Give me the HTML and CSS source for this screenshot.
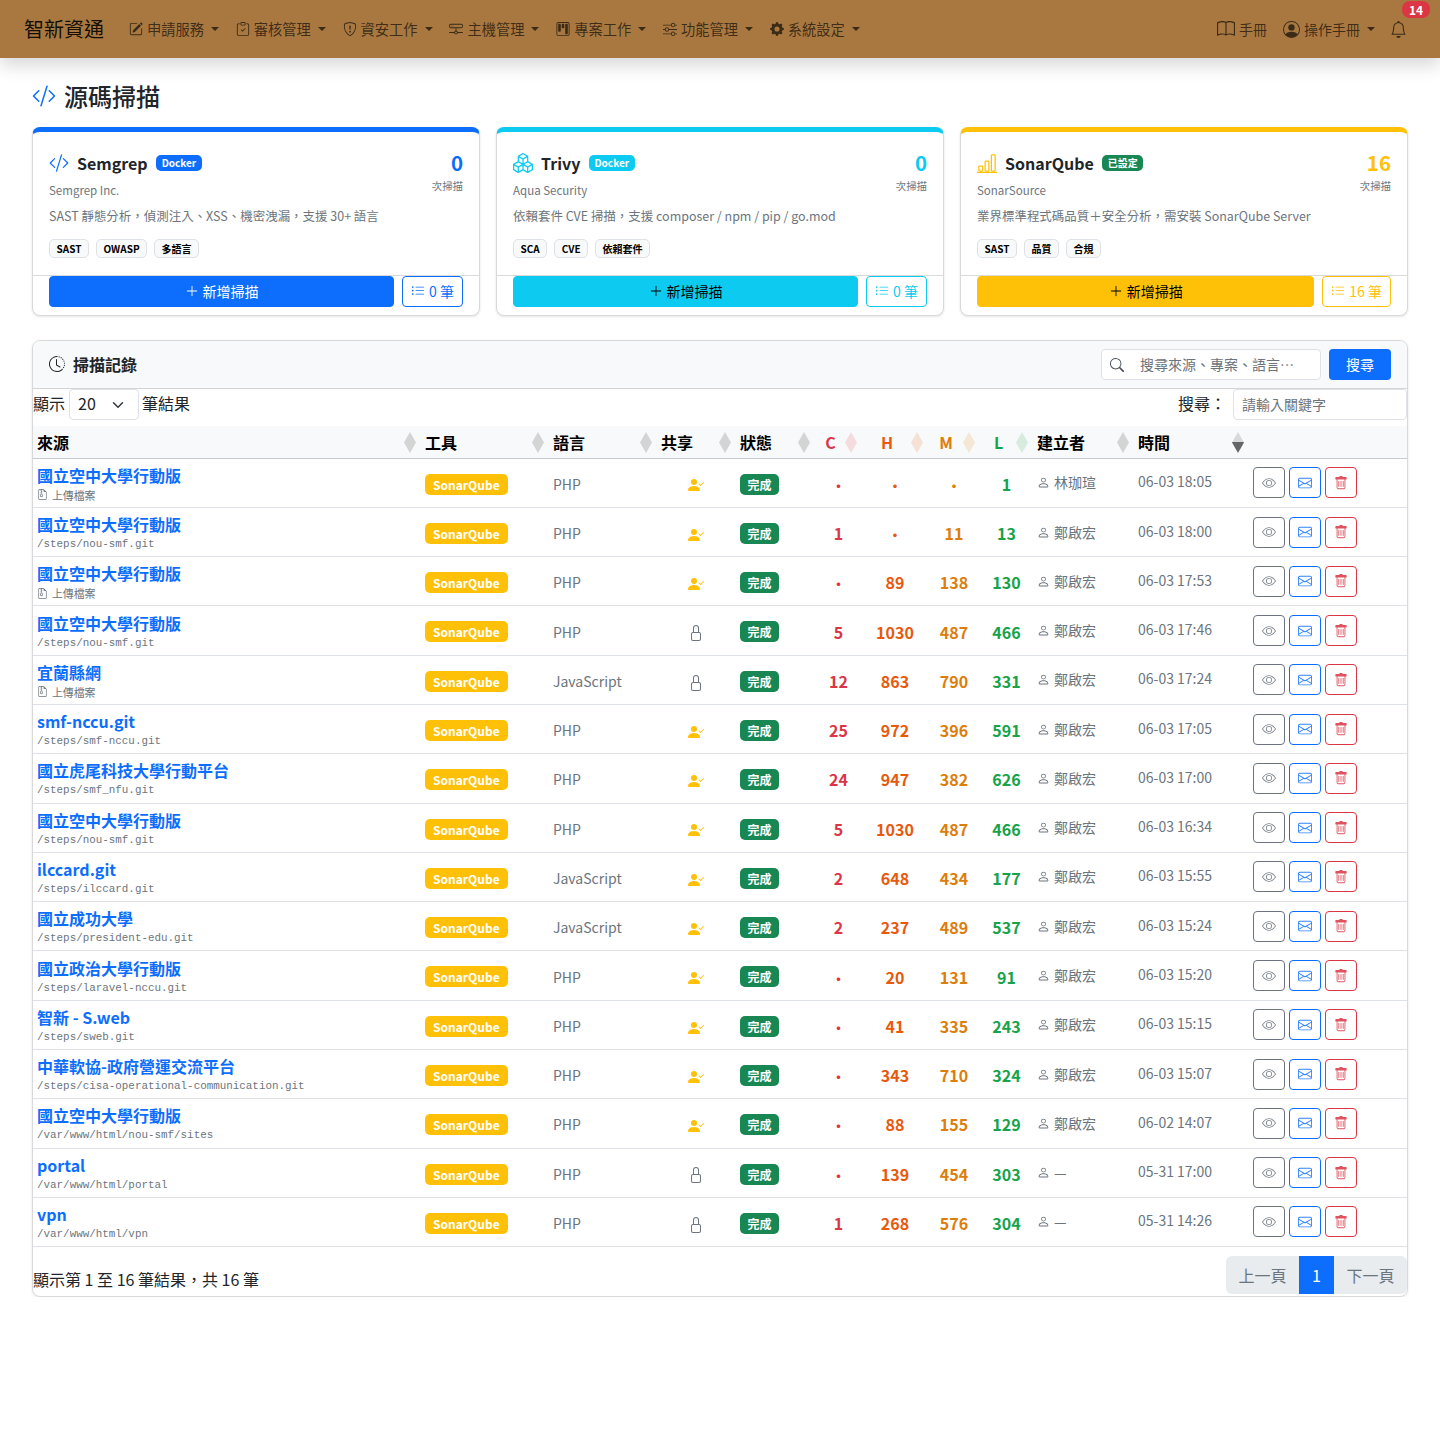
FILE: index.html
```html
<!DOCTYPE html>
<html lang="zh-Hant">
<head>
    <meta charset="utf-8">
    <title>源碼掃描</title>
    <link rel="stylesheet" href="styles.css">
</head>
<body>
    <svg class="icon-defs" xmlns="http://www.w3.org/2000/svg">
        <symbol id="i-code" viewBox="0 0 16 16"><path d="M10.478 1.647a.5.5 0 1 0-.956-.294l-4 13a.5.5 0 0 0 .956.294l4-13zM4.854 4.146a.5.5 0 0 1 0 .708L1.707 8l3.147 3.146a.5.5 0 0 1-.708.708l-3.5-3.5a.5.5 0 0 1 0-.708l3.5-3.5a.5.5 0 0 1 .708 0zm6.292 0a.5.5 0 0 0 0 .708L14.293 8l-3.147 3.146a.5.5 0 0 0 .708.708l3.5-3.5a.5.5 0 0 0 0-.708l-3.5-3.5a.5.5 0 0 0-.708 0z"/></symbol>
        <symbol id="i-pencil" viewBox="0 0 16 16"><path d="M15.502 1.94a.5.5 0 0 1 0 .706L14.459 3.69l-2-2L13.502.646a.5.5 0 0 1 .707 0l1.293 1.293zm-1.75 2.456-2-2L4.939 9.21a.5.5 0 0 0-.121.196l-.805 2.414a.25.25 0 0 0 .316.316l2.414-.805a.5.5 0 0 0 .196-.12l6.813-6.814z"/><path d="M1 13.5A1.5 1.5 0 0 0 2.5 15h11a1.5 1.5 0 0 0 1.5-1.5v-6a.5.5 0 0 0-1 0v6a.5.5 0 0 1-.5.5h-11a.5.5 0 0 1-.5-.5v-11a.5.5 0 0 1 .5-.5H9a.5.5 0 0 0 0-1H2.5A1.5 1.5 0 0 0 1 2.5v11z"/></symbol>
        <symbol id="i-clipboard" viewBox="0 0 16 16"><path d="M10.854 7.146a.5.5 0 0 1 0 .708l-3 3a.5.5 0 0 1-.708 0l-1.5-1.5a.5.5 0 1 1 .708-.708L7.5 9.793l2.646-2.647a.5.5 0 0 1 .708 0z"/><path d="M4 1.5H3a2 2 0 0 0-2 2V14a2 2 0 0 0 2 2h10a2 2 0 0 0 2-2V3.5a2 2 0 0 0-2-2h-1v1h1a1 1 0 0 1 1 1V14a1 1 0 0 1-1 1H3a1 1 0 0 1-1-1V3.5a1 1 0 0 1 1-1h1v-1z"/><path d="M9.5 1a.5.5 0 0 1 .5.5v1a.5.5 0 0 1-.5.5h-3a.5.5 0 0 1-.5-.5v-1a.5.5 0 0 1 .5-.5h3zm-3-1A1.5 1.5 0 0 0 5 1.5v1A1.5 1.5 0 0 0 6.5 4h3A1.5 1.5 0 0 0 11 2.5v-1A1.5 1.5 0 0 0 9.5 0h-3z"/></symbol>
        <symbol id="i-shield" viewBox="0 0 16 16"><path d="M5.338 1.59a61.44 61.44 0 0 0-2.837.856.481.481 0 0 0-.328.39c-.554 4.157.726 7.19 2.253 9.188a10.725 10.725 0 0 0 2.287 2.233c.346.244.652.42.893.533.12.057.218.095.293.118a.55.55 0 0 0 .101.025.615.615 0 0 0 .1-.025c.076-.023.174-.061.294-.118.24-.113.547-.29.893-.533a10.726 10.726 0 0 0 2.287-2.233c1.527-1.997 2.807-5.031 2.253-9.188a.48.48 0 0 0-.328-.39c-.651-.213-1.75-.56-2.837-.855C9.552 1.29 8.531 1.067 8 1.067c-.53 0-1.552.223-2.662.524zM5.072.56C6.157.265 7.31 0 8 0s1.843.265 2.928.56c1.11.3 2.229.655 2.887.87a1.54 1.54 0 0 1 1.044 1.262c.596 4.477-.787 7.795-2.465 9.99a11.775 11.775 0 0 1-2.517 2.453 7.159 7.159 0 0 1-1.048.625c-.28.132-.581.24-.829.24s-.548-.108-.829-.24a7.158 7.158 0 0 1-1.048-.625 11.777 11.777 0 0 1-2.517-2.453C1.928 10.487.545 7.169 1.141 2.692A1.54 1.54 0 0 1 2.185 1.43 62.456 62.456 0 0 1 5.072.56z"/><path d="M7.001 11a1 1 0 1 1 2 0 1 1 0 0 1-2 0zM7.1 4.995a.905.905 0 1 1 1.8 0l-.35 3.507a.553.553 0 0 1-1.1 0L7.1 4.995z"/></symbol>
        <symbol id="i-hdd" viewBox="0 0 16 16"><path d="M4.5 5a.5.5 0 1 0 0-1 .5.5 0 0 0 0 1zM3 4.5a.5.5 0 1 1-1 0 .5.5 0 0 1 1 0z"/><path d="M0 4a2 2 0 0 1 2-2h12a2 2 0 0 1 2 2v1a2 2 0 0 1-2 2H8.5v3a1.5 1.5 0 0 1 1.5 1.5h5.5a.5.5 0 0 1 0 1H10A1.5 1.5 0 0 1 8.5 14h-1A1.5 1.5 0 0 1 6 12.5H.5a.5.5 0 0 1 0-1H6A1.5 1.5 0 0 1 7.5 10V7H2a2 2 0 0 1-2-2V4zm1 0v1a1 1 0 0 0 1 1h12a1 1 0 0 0 1-1V4a1 1 0 0 0-1-1H2a1 1 0 0 0-1 1zm6 7.5v1a.5.5 0 0 0 .5.5h1a.5.5 0 0 0 .5-.5v-1a.5.5 0 0 0-.5-.5h-1a.5.5 0 0 0-.5.5z"/></symbol>
        <symbol id="i-kanban" viewBox="0 0 16 16"><path d="M13.5 1a1 1 0 0 1 1 1v12a1 1 0 0 1-1 1h-11a1 1 0 0 1-1-1V2a1 1 0 0 1 1-1h11zm-11-1a2 2 0 0 0-2 2v12a2 2 0 0 0 2 2h11a2 2 0 0 0 2-2V2a2 2 0 0 0-2-2h-11z"/><path d="M6.5 3a1 1 0 0 1 1-1h1a1 1 0 0 1 1 1v3a1 1 0 0 1-1 1h-1a1 1 0 0 1-1-1V3zm-4 0a1 1 0 0 1 1-1h1a1 1 0 0 1 1 1v7a1 1 0 0 1-1 1h-1a1 1 0 0 1-1-1V3zm8 0a1 1 0 0 1 1-1h1a1 1 0 0 1 1 1v10a1 1 0 0 1-1 1h-1a1 1 0 0 1-1-1V3z"/></symbol>
        <symbol id="i-sliders" viewBox="0 0 16 16"><path d="M11.5 2a1.5 1.5 0 1 0 0 3 1.5 1.5 0 0 0 0-3zM9.05 3a2.5 2.5 0 0 1 4.9 0H16v1h-2.05a2.5 2.5 0 0 1-4.9 0H0V3h9.05zM4.5 7a1.5 1.5 0 1 0 0 3 1.5 1.5 0 0 0 0-3zM2.05 8a2.5 2.5 0 0 1 4.9 0H16v1H6.95a2.5 2.5 0 0 1-4.9 0H0V8h2.05zm9.45 4a1.5 1.5 0 1 0 0 3 1.5 1.5 0 0 0 0-3zm-2.45 1a2.5 2.5 0 0 1 4.9 0H16v1h-2.05a2.5 2.5 0 0 1-4.9 0H0v-1h9.05z"/></symbol>
        <symbol id="i-gear" viewBox="0 0 16 16"><path d="M9.405 1.05c-.413-1.4-2.397-1.4-2.81 0l-.1.34a1.464 1.464 0 0 1-2.105.872l-.31-.17c-1.283-.698-2.686.705-1.987 1.987l.169.311c.446.82.023 1.841-.872 2.105l-.34.1c-1.4.413-1.4 2.397 0 2.81l.34.1a1.464 1.464 0 0 1 .872 2.105l-.17.31c-.698 1.283.705 2.686 1.987 1.987l.311-.169a1.464 1.464 0 0 1 2.105.872l.1.34c.413 1.4 2.397 1.4 2.81 0l.1-.34a1.464 1.464 0 0 1 2.105-.872l.31.17c1.283.698 2.686-.705 1.987-1.987l-.169-.311a1.464 1.464 0 0 1 .872-2.105l.34-.1c1.4-.413 1.4-2.397 0-2.81l-.34-.1a1.464 1.464 0 0 1-.872-2.105l.17-.31c.698-1.283-.705-2.686-1.987-1.987l-.311.169a1.464 1.464 0 0 1-2.105-.872l-.1-.34zM8 10.93a2.929 2.929 0 1 1 0-5.86 2.929 2.929 0 0 1 0 5.858z"/></symbol>
        <symbol id="i-book" viewBox="0 0 16 16"><path d="M1 2.828c.885-.37 2.154-.769 3.388-.893 1.33-.134 2.458.063 3.112.752v9.746c-.935-.53-2.12-.603-3.213-.493-1.18.12-2.37.461-3.287.811V2.828zm7.5-.141c.654-.689 1.782-.886 3.112-.752 1.234.124 2.503.523 3.388.893v9.923c-.918-.35-2.107-.692-3.287-.81-1.094-.111-2.278-.039-3.213.492V2.687zM8 1.783C7.015.936 5.587.81 4.287.94c-1.514.153-3.042.672-3.994 1.105A.5.5 0 0 0 0 2.5v11a.5.5 0 0 0 .707.455c.882-.4 2.303-.881 3.68-1.02 1.409-.142 2.59.087 3.223.877a.5.5 0 0 0 .78 0c.633-.79 1.814-1.019 3.222-.877 1.378.139 2.8.62 3.681 1.02A.5.5 0 0 0 16 13.5v-11a.5.5 0 0 0-.293-.455c-.952-.433-2.48-.952-3.994-1.105C10.413.809 8.985.936 8 1.783z"/></symbol>
        <symbol id="i-person-circle" viewBox="0 0 16 16"><path d="M11 6a3 3 0 1 1-6 0 3 3 0 0 1 6 0z"/><path d="M0 8a8 8 0 1 1 16 0A8 8 0 0 1 0 8zm8-7a7 7 0 0 0-5.468 11.37C3.242 11.226 4.805 10 8 10s4.757 1.225 5.468 2.37A7 7 0 0 0 8 1z"/></symbol>
        <symbol id="i-bell" viewBox="0 0 16 16"><path d="M8 16a2 2 0 0 0 2-2H6a2 2 0 0 0 2 2zM8 1.918l-.797.161A4.002 4.002 0 0 0 4 6c0 .628-.134 2.197-.459 3.742-.16.767-.376 1.566-.663 2.258h10.244c-.287-.692-.502-1.49-.663-2.258C12.134 8.197 12 6.628 12 6a4.002 4.002 0 0 0-3.203-3.92L8 1.917zM14.22 12c.223.447.481.801.78 1H1c.299-.199.557-.553.78-1C2.68 10.2 3 6.88 3 6c0-2.42 1.72-4.44 4.005-4.901a1 1 0 1 1 1.99 0A5.002 5.002 0 0 1 13 6c0 .88.32 4.2 1.22 6z"/></symbol>
        <symbol id="i-boxes" viewBox="0 0 16 16"><path d="M7.752.066a.5.5 0 0 1 .496 0l3.75 2.143a.5.5 0 0 1 .252.434v3.995l3.498 2A.5.5 0 0 1 16 9.07v4.286a.5.5 0 0 1-.252.434l-3.75 2.143a.5.5 0 0 1-.496 0l-3.502-2-3.502 2.001a.5.5 0 0 1-.496 0l-3.75-2.143A.5.5 0 0 1 0 13.357V9.071a.5.5 0 0 1 .252-.434L3.75 6.638V2.643a.5.5 0 0 1 .252-.434L7.752.066ZM4.25 7.504 1.508 9.071l2.742 1.567 2.742-1.567L4.25 7.504ZM7.5 9.933l-2.75 1.571v3.134l2.75-1.571V9.933Zm1 3.134 2.75 1.571v-3.134L8.5 9.933v3.134Zm.508-3.996 2.742 1.567 2.742-1.567-2.742-1.567-2.742 1.567Zm2.242-2.433V3.504L8.5 5.076V8.21l2.75-1.572ZM7.5 8.21V5.076L4.75 3.504v3.134L7.5 8.21ZM5.258 2.643 8 4.21l2.742-1.567L8 1.076 5.258 2.643ZM15 9.933l-2.75 1.571v3.134L15 13.067V9.933ZM3.75 14.638v-3.134L1 9.933v3.134l2.75 1.571Z"/></symbol>
        <symbol id="i-bars" viewBox="0 0 16 16"><path d="M4 11H2v3h2v-3zm5-4H7v7h2V7zm5-5v12h-2V2h2zm-2-1a1 1 0 0 0-1 1v12a1 1 0 0 0 1 1h2a1 1 0 0 0 1-1V2a1 1 0 0 0-1-1h-2zM6 7a1 1 0 0 1 1-1h2a1 1 0 0 1 1 1v7a1 1 0 0 1-1 1H7a1 1 0 0 1-1-1V7zm-5 4a1 1 0 0 1 1-1h2a1 1 0 0 1 1 1v3a1 1 0 0 1-1 1H2a1 1 0 0 1-1-1v-3z"/><path d="M0 15h16v1H0z"/></symbol>
        <symbol id="i-clock" viewBox="0 0 16 16"><path d="M8.515 1.019A7 7 0 0 0 8 1V0a8 8 0 0 1 .589.022l-.074.997zm2.004.45a7.003 7.003 0 0 0-.985-.299l.219-.976c.383.086.76.2 1.126.342l-.36.933zm1.37.71a7.01 7.01 0 0 0-.439-.27l.493-.87a8.025 8.025 0 0 1 .979.654l-.615.789a6.996 6.996 0 0 0-.418-.302zm1.834 1.79a6.99 6.99 0 0 0-.653-.796l.724-.69c.27.285.52.59.747.91l-.818.576zm.744 1.352a7.08 7.08 0 0 0-.214-.468l.893-.45a7.976 7.976 0 0 1 .45 1.088l-.95.313a7.023 7.023 0 0 0-.179-.483zm.53 2.507a6.991 6.991 0 0 0-.1-1.025l.985-.17c.067.386.106.778.116 1.17l-1 .025zm-.131 1.538c.033-.17.06-.339.081-.51l.993.123a7.957 7.957 0 0 1-.23 1.155l-.964-.267c.046-.165.086-.332.12-.501zm-.952 2.379c.184-.29.346-.594.486-.908l.914.405c-.16.36-.345.706-.555 1.038l-.845-.535zm-.964 1.205c.122-.122.239-.248.35-.378l.758.653a8.073 8.073 0 0 1-.401.432l-.707-.707z"/><path d="M8 1a7 7 0 1 0 4.95 11.95l.707.707A8.001 8.001 0 1 1 8 0v1z"/><path d="M7.5 3a.5.5 0 0 1 .5.5v5.21l3.248 1.856a.5.5 0 0 1-.496.868l-3.5-2A.5.5 0 0 1 7 9V3.5a.5.5 0 0 1 .5-.5z"/></symbol>
        <symbol id="i-plus" viewBox="0 0 16 16"><path d="M8 2a.5.5 0 0 1 .5.5v5h5a.5.5 0 0 1 0 1h-5v5a.5.5 0 0 1-1 0v-5h-5a.5.5 0 0 1 0-1h5v-5A.5.5 0 0 1 8 2Z"/></symbol>
        <symbol id="i-list" viewBox="0 0 16 16"><path d="M5 11.5a.5.5 0 0 1 .5-.5h9a.5.5 0 0 1 0 1h-9a.5.5 0 0 1-.5-.5zm0-4a.5.5 0 0 1 .5-.5h9a.5.5 0 0 1 0 1h-9a.5.5 0 0 1-.5-.5zm0-4a.5.5 0 0 1 .5-.5h9a.5.5 0 0 1 0 1h-9a.5.5 0 0 1-.5-.5zm-3 1a1 1 0 1 0 0-2 1 1 0 0 0 0 2zm0 4a1 1 0 1 0 0-2 1 1 0 0 0 0 2zm0 4a1 1 0 1 0 0-2 1 1 0 0 0 0 2z"/></symbol>
        <symbol id="i-search" viewBox="0 0 16 16"><path d="M11.742 10.344a6.5 6.5 0 1 0-1.397 1.398h-.001c.03.04.062.078.098.115l3.85 3.85a1 1 0 0 0 1.415-1.414l-3.85-3.85a1.007 1.007 0 0 0-.115-.1zM12 6.5a5.5 5.5 0 1 1-11 0 5.5 5.5 0 0 1 11 0z"/></symbol>
        <symbol id="i-eye" viewBox="0 0 16 16"><path d="M16 8s-3-5.5-8-5.5S0 8 0 8s3 5.5 8 5.5S16 8 16 8zM1.173 8a13.133 13.133 0 0 1 1.66-2.043C4.12 4.668 5.88 3.5 8 3.5c2.12 0 3.879 1.168 5.168 2.457A13.133 13.133 0 0 1 14.828 8c-.058.087-.122.183-.195.288-.335.48-.83 1.12-1.465 1.755C11.879 11.332 10.119 12.5 8 12.5c-2.12 0-3.879-1.168-5.168-2.457A13.134 13.134 0 0 1 1.172 8z"/><path d="M8 5.5a2.5 2.5 0 1 0 0 5 2.5 2.5 0 0 0 0-5zM4.5 8a3.5 3.5 0 1 1 7 0 3.5 3.5 0 0 1-7 0z"/></symbol>
        <symbol id="i-mail" viewBox="0 0 16 16"><path d="M0 4a2 2 0 0 1 2-2h12a2 2 0 0 1 2 2v8a2 2 0 0 1-2 2H2a2 2 0 0 1-2-2V4Zm2-1a1 1 0 0 0-1 1v.217l7 4.2 7-4.2V4a1 1 0 0 0-1-1H2Zm13 2.383-4.708 2.825L15 11.105V5.383Zm-.034 6.876-5.64-3.471L8 9.583l-1.326-.795-5.64 3.47A1 1 0 0 0 2 13h12a1 1 0 0 0 .966-.741ZM1 11.105l4.708-2.897L1 5.383v5.722Z"/></symbol>
        <symbol id="i-trash" viewBox="0 0 16 16"><path d="M5.5 5.5A.5.5 0 0 1 6 6v6a.5.5 0 0 1-1 0V6a.5.5 0 0 1 .5-.5zm2.5 0a.5.5 0 0 1 .5.5v6a.5.5 0 0 1-1 0V6a.5.5 0 0 1 .5-.5zm3 .5a.5.5 0 0 0-1 0v6a.5.5 0 0 0 1 0V6z"/><path d="M14.5 3a1 1 0 0 1-1 1H13v9a2 2 0 0 1-2 2H5a2 2 0 0 1-2-2V4h-.5a1 1 0 0 1-1-1V2a1 1 0 0 1 1-1H6a1 1 0 0 1 1-1h2a1 1 0 0 1 1 1h3.5a1 1 0 0 1 1 1v1zM4.118 4 4 4.059V13a1 1 0 0 0 1 1h6a1 1 0 0 0 1-1V4.059L11.882 4H4.118zM2.5 3V2h11v1h-11z"/></symbol>
        <symbol id="i-person" viewBox="0 0 16 16"><path d="M8 8a3 3 0 1 0 0-6 3 3 0 0 0 0 6Zm2-3a2 2 0 1 1-4 0 2 2 0 0 1 4 0Zm4 8c0 1-1 1-1 1H3s-1 0-1-1 1-4 6-4 6 3 6 4Zm-1-.004c-.001-.246-.154-.986-.832-1.664C11.516 10.68 10.289 10 8 10c-2.29 0-3.516.68-4.168 1.332-.678.678-.83 1.418-.832 1.664h10Z"/></symbol>
        <symbol id="i-shared" viewBox="0 0 16 16"><path d="M15.854 5.146a.5.5 0 0 1 0 .708l-3 3a.5.5 0 0 1-.708 0l-1.5-1.5a.5.5 0 0 1 .708-.708L12.5 7.793l2.646-2.647a.5.5 0 0 1 .708 0z"/><path d="M1 14s-1 0-1-1 1-4 6-4 6 3 6 4-1 1-1 1H1zm5-6a3 3 0 1 0 0-6 3 3 0 0 0 0 6z"/></symbol>
        <symbol id="i-lock" viewBox="0 0 16 16"><path d="M8 1a2 2 0 0 1 2 2v4H6V3a2 2 0 0 1 2-2zm3 6V3a3 3 0 0 0-6 0v4a2 2 0 0 0-2 2v5a2 2 0 0 0 2 2h6a2 2 0 0 0 2-2V9a2 2 0 0 0-2-2zM5 8h6a1 1 0 0 1 1 1v5a1 1 0 0 1-1 1H5a1 1 0 0 1-1-1V9a1 1 0 0 1 1-1z"/></symbol>
        <symbol id="i-zip" viewBox="0 0 16 16"><path d="M5 7.5a1 1 0 0 1 1-1h1a1 1 0 0 1 1 1v.938l.4 1.599a1 1 0 0 1-.416 1.074l-.93.62a1 1 0 0 1-1.11 0l-.929-.62a1 1 0 0 1-.415-1.074L5 8.438V7.5zm2 0H6v.938a1 1 0 0 1-.03.243l-.4 1.598.93.62.929-.62-.4-1.598A1 1 0 0 1 7 8.438V7.5z"/><path d="M14 4.5V14a2 2 0 0 1-2 2H4a2 2 0 0 1-2-2V2a2 2 0 0 1 2-2h5.5L14 4.5zm-3 0A1.5 1.5 0 0 1 9.5 3V1h-2v1h-1v1h1v1h-1v1h1v1H6V5H5V4h1V3H5V2h1V1H4a1 1 0 0 0-1 1v12a1 1 0 0 0 1 1h8a1 1 0 0 0 1-1V4.5h-2z"/></symbol>
    </svg>

    <nav class="navbar">
        <a class="brand">智新資通</a>
        <ul class="nav-menu">
            <li class="nav-link"><svg class="ic"><use href="#i-pencil"/></svg>申請服務<span class="caret"></span></li>
            <li class="nav-link"><svg class="ic"><use href="#i-clipboard"/></svg>審核管理<span class="caret"></span></li>
            <li class="nav-link"><svg class="ic"><use href="#i-shield"/></svg>資安工作<span class="caret"></span></li>
            <li class="nav-link"><svg class="ic"><use href="#i-hdd"/></svg>主機管理<span class="caret"></span></li>
            <li class="nav-link"><svg class="ic"><use href="#i-kanban"/></svg>專案工作<span class="caret"></span></li>
            <li class="nav-link"><svg class="ic"><use href="#i-sliders"/></svg>功能管理<span class="caret"></span></li>
            <li class="nav-link"><svg class="ic"><use href="#i-gear"/></svg>系統設定<span class="caret"></span></li>
        </ul>
        <div class="nav-right">
            <a class="nav-plain"><svg class="ic ic-lg"><use href="#i-book"/></svg>手冊</a>
            <a class="nav-plain"><svg class="ic ic-user"><use href="#i-person-circle"/></svg>操作手冊<span class="caret"></span></a>
            <a class="nav-bell">
                <svg class="ic ic-bell"><use href="#i-bell"/></svg>
                <span class="bell-count">14</span>
            </a>
        </div>
    </nav>

    <main class="page">
        <h1 class="page-title"><svg class="ic title-icon"><use href="#i-code"/></svg>源碼掃描</h1>

        <section class="tool-grid">
            <div class="tool-card card-blue">
                <div class="tool-body">
                    <div class="tool-head">
                        <div>
                            <div class="tool-name"><svg class="ic tool-icon"><use href="#i-code"/></svg>Semgrep<span class="pill pill-blue">Docker</span></div>
                            <div class="tool-vendor">Semgrep Inc.</div>
                        </div>
                        <div class="tool-count"><strong>0</strong><span>次掃描</span></div>
                    </div>
                    <p class="tool-desc">SAST 靜態分析&#xFF0C;偵測注入、XSS、機密洩漏&#xFF0C;支援 30+ 語言</p>
                    <div class="tags"><span class="tag">SAST</span><span class="tag">OWASP</span><span class="tag">多語言</span></div>
                </div>
                <div class="tool-foot">
                    <button class="btn-add"><svg class="ic"><use href="#i-plus"/></svg>新增掃描</button>
                    <button class="btn-list"><svg class="ic"><use href="#i-list"/></svg>0 筆</button>
                </div>
            </div>

            <div class="tool-card card-cyan">
                <div class="tool-body">
                    <div class="tool-head">
                        <div>
                            <div class="tool-name"><svg class="ic tool-icon"><use href="#i-boxes"/></svg>Trivy<span class="pill pill-cyan">Docker</span></div>
                            <div class="tool-vendor">Aqua Security</div>
                        </div>
                        <div class="tool-count"><strong>0</strong><span>次掃描</span></div>
                    </div>
                    <p class="tool-desc">依賴套件 CVE 掃描&#xFF0C;支援 composer / npm / pip / go.mod</p>
                    <div class="tags"><span class="tag">SCA</span><span class="tag">CVE</span><span class="tag">依賴套件</span></div>
                </div>
                <div class="tool-foot">
                    <button class="btn-add"><svg class="ic"><use href="#i-plus"/></svg>新增掃描</button>
                    <button class="btn-list"><svg class="ic"><use href="#i-list"/></svg>0 筆</button>
                </div>
            </div>

            <div class="tool-card card-yellow">
                <div class="tool-body">
                    <div class="tool-head">
                        <div>
                            <div class="tool-name"><svg class="ic tool-icon"><use href="#i-bars"/></svg>SonarQube<span class="pill pill-green">已設定</span></div>
                            <div class="tool-vendor">SonarSource</div>
                        </div>
                        <div class="tool-count"><strong>16</strong><span>次掃描</span></div>
                    </div>
                    <p class="tool-desc">業界標準程式碼品質&#xFF0B;安全分析&#xFF0C;需安裝 SonarQube Server</p>
                    <div class="tags"><span class="tag">SAST</span><span class="tag">品質</span><span class="tag">合規</span></div>
                </div>
                <div class="tool-foot">
                    <button class="btn-add"><svg class="ic"><use href="#i-plus"/></svg>新增掃描</button>
                    <button class="btn-list"><svg class="ic"><use href="#i-list"/></svg>16 筆</button>
                </div>
            </div>
        </section>

        <section class="panel">
            <div class="panel-head">
                <div class="panel-title"><svg class="ic"><use href="#i-clock"/></svg>掃描記錄</div>
                <form class="panel-search">
                    <label class="search-box"><svg class="ic"><use href="#i-search"/></svg><input type="text" placeholder="搜尋來源、專案、語言…"></label>
                    <button type="button" class="btn-search">搜尋</button>
                </form>
            </div>

            <div class="table-tools">
                <div class="length">顯示<select class="length-select"><option>20</option></select>筆結果</div>
                <label class="filter">搜尋&#xFF1A;<input type="text" placeholder="請輸入關鍵字"></label>
            </div>

            <table class="scans">
                <colgroup>
                    <col class="w-src"><col class="w-tool"><col class="w-lang"><col class="w-share"><col class="w-state">
                    <col class="w-c"><col class="w-h"><col class="w-m"><col class="w-l">
                    <col class="w-user"><col class="w-time"><col class="w-act">
                </colgroup>
                <thead>
                    <tr>
                        <th>來源<i class="sort"></i></th>
                        <th>工具<i class="sort"></i></th>
                        <th>語言<i class="sort"></i></th>
                        <th>共享<i class="sort"></i></th>
                        <th>狀態<i class="sort"></i></th>
                        <th class="sev sev-c">C<i class="sort"></i></th>
                        <th class="sev sev-h">H<i class="sort"></i></th>
                        <th class="sev sev-m">M<i class="sort"></i></th>
                        <th class="sev sev-l">L<i class="sort"></i></th>
                        <th>建立者<i class="sort"></i></th>
                        <th>時間<i class="sort sort-desc"></i></th>
                        <th></th>
                    </tr>
                </thead>
                <tbody>
                    <tr>
                        <td><a class="src-name">國立空中大學行動版</a><div class="src-file"><svg class="ic"><use href="#i-zip"/></svg>上傳檔案</div></td>
                        <td><span class="badge badge-tool">SonarQube</span></td><td class="lang">PHP</td>
                        <td class="share"><svg class="ic is-shared"><use href="#i-shared"/></svg></td>
                        <td><span class="badge badge-done">完成</span></td>
                        <td class="num num-c"><span class="nil">•</span></td><td class="num num-h"><span class="nil">•</span></td><td class="num num-m"><span class="nil">•</span></td><td class="num num-l">1</td>
                        <td class="muted"><svg class="ic user-ic"><use href="#i-person"/></svg>林珈瑄</td><td class="muted when">06-03 18:05</td>
                        <td><div class="actions"><button class="act act-view"><svg class="ic"><use href="#i-eye"/></svg></button><button class="act act-mail"><svg class="ic"><use href="#i-mail"/></svg></button><button class="act act-del"><svg class="ic"><use href="#i-trash"/></svg></button></div></td>
                    </tr>
                    <tr>
                        <td><a class="src-name">國立空中大學行動版</a><div class="src-path">/steps/nou-smf.git</div></td>
                        <td><span class="badge badge-tool">SonarQube</span></td><td class="lang">PHP</td>
                        <td class="share"><svg class="ic is-shared"><use href="#i-shared"/></svg></td>
                        <td><span class="badge badge-done">完成</span></td>
                        <td class="num num-c">1</td><td class="num num-h"><span class="nil">•</span></td><td class="num num-m">11</td><td class="num num-l">13</td>
                        <td class="muted"><svg class="ic user-ic"><use href="#i-person"/></svg>鄭啟宏</td><td class="muted when">06-03 18:00</td>
                        <td><div class="actions"><button class="act act-view"><svg class="ic"><use href="#i-eye"/></svg></button><button class="act act-mail"><svg class="ic"><use href="#i-mail"/></svg></button><button class="act act-del"><svg class="ic"><use href="#i-trash"/></svg></button></div></td>
                    </tr>
                    <tr>
                        <td><a class="src-name">國立空中大學行動版</a><div class="src-file"><svg class="ic"><use href="#i-zip"/></svg>上傳檔案</div></td>
                        <td><span class="badge badge-tool">SonarQube</span></td><td class="lang">PHP</td>
                        <td class="share"><svg class="ic is-shared"><use href="#i-shared"/></svg></td>
                        <td><span class="badge badge-done">完成</span></td>
                        <td class="num num-c"><span class="nil">•</span></td><td class="num num-h">89</td><td class="num num-m">138</td><td class="num num-l">130</td>
                        <td class="muted"><svg class="ic user-ic"><use href="#i-person"/></svg>鄭啟宏</td><td class="muted when">06-03 17:53</td>
                        <td><div class="actions"><button class="act act-view"><svg class="ic"><use href="#i-eye"/></svg></button><button class="act act-mail"><svg class="ic"><use href="#i-mail"/></svg></button><button class="act act-del"><svg class="ic"><use href="#i-trash"/></svg></button></div></td>
                    </tr>
                    <tr>
                        <td><a class="src-name">國立空中大學行動版</a><div class="src-path">/steps/nou-smf.git</div></td>
                        <td><span class="badge badge-tool">SonarQube</span></td><td class="lang">PHP</td>
                        <td class="share"><svg class="ic is-private"><use href="#i-lock"/></svg></td>
                        <td><span class="badge badge-done">完成</span></td>
                        <td class="num num-c">5</td><td class="num num-h">1030</td><td class="num num-m">487</td><td class="num num-l">466</td>
                        <td class="muted"><svg class="ic user-ic"><use href="#i-person"/></svg>鄭啟宏</td><td class="muted when">06-03 17:46</td>
                        <td><div class="actions"><button class="act act-view"><svg class="ic"><use href="#i-eye"/></svg></button><button class="act act-mail"><svg class="ic"><use href="#i-mail"/></svg></button><button class="act act-del"><svg class="ic"><use href="#i-trash"/></svg></button></div></td>
                    </tr>
                    <tr>
                        <td><a class="src-name">宜蘭縣網</a><div class="src-file"><svg class="ic"><use href="#i-zip"/></svg>上傳檔案</div></td>
                        <td><span class="badge badge-tool">SonarQube</span></td><td class="lang">JavaScript</td>
                        <td class="share"><svg class="ic is-private"><use href="#i-lock"/></svg></td>
                        <td><span class="badge badge-done">完成</span></td>
                        <td class="num num-c">12</td><td class="num num-h">863</td><td class="num num-m">790</td><td class="num num-l">331</td>
                        <td class="muted"><svg class="ic user-ic"><use href="#i-person"/></svg>鄭啟宏</td><td class="muted when">06-03 17:24</td>
                        <td><div class="actions"><button class="act act-view"><svg class="ic"><use href="#i-eye"/></svg></button><button class="act act-mail"><svg class="ic"><use href="#i-mail"/></svg></button><button class="act act-del"><svg class="ic"><use href="#i-trash"/></svg></button></div></td>
                    </tr>
                    <tr>
                        <td><a class="src-name">smf-nccu.git</a><div class="src-path">/steps/smf-nccu.git</div></td>
                        <td><span class="badge badge-tool">SonarQube</span></td><td class="lang">PHP</td>
                        <td class="share"><svg class="ic is-shared"><use href="#i-shared"/></svg></td>
                        <td><span class="badge badge-done">完成</span></td>
                        <td class="num num-c">25</td><td class="num num-h">972</td><td class="num num-m">396</td><td class="num num-l">591</td>
                        <td class="muted"><svg class="ic user-ic"><use href="#i-person"/></svg>鄭啟宏</td><td class="muted when">06-03 17:05</td>
                        <td><div class="actions"><button class="act act-view"><svg class="ic"><use href="#i-eye"/></svg></button><button class="act act-mail"><svg class="ic"><use href="#i-mail"/></svg></button><button class="act act-del"><svg class="ic"><use href="#i-trash"/></svg></button></div></td>
                    </tr>
                    <tr>
                        <td><a class="src-name">國立虎尾科技大學行動平台</a><div class="src-path">/steps/smf_nfu.git</div></td>
                        <td><span class="badge badge-tool">SonarQube</span></td><td class="lang">PHP</td>
                        <td class="share"><svg class="ic is-shared"><use href="#i-shared"/></svg></td>
                        <td><span class="badge badge-done">完成</span></td>
                        <td class="num num-c">24</td><td class="num num-h">947</td><td class="num num-m">382</td><td class="num num-l">626</td>
                        <td class="muted"><svg class="ic user-ic"><use href="#i-person"/></svg>鄭啟宏</td><td class="muted when">06-03 17:00</td>
                        <td><div class="actions"><button class="act act-view"><svg class="ic"><use href="#i-eye"/></svg></button><button class="act act-mail"><svg class="ic"><use href="#i-mail"/></svg></button><button class="act act-del"><svg class="ic"><use href="#i-trash"/></svg></button></div></td>
                    </tr>
                    <tr>
                        <td><a class="src-name">國立空中大學行動版</a><div class="src-path">/steps/nou-smf.git</div></td>
                        <td><span class="badge badge-tool">SonarQube</span></td><td class="lang">PHP</td>
                        <td class="share"><svg class="ic is-shared"><use href="#i-shared"/></svg></td>
                        <td><span class="badge badge-done">完成</span></td>
                        <td class="num num-c">5</td><td class="num num-h">1030</td><td class="num num-m">487</td><td class="num num-l">466</td>
                        <td class="muted"><svg class="ic user-ic"><use href="#i-person"/></svg>鄭啟宏</td><td class="muted when">06-03 16:34</td>
                        <td><div class="actions"><button class="act act-view"><svg class="ic"><use href="#i-eye"/></svg></button><button class="act act-mail"><svg class="ic"><use href="#i-mail"/></svg></button><button class="act act-del"><svg class="ic"><use href="#i-trash"/></svg></button></div></td>
                    </tr>
                    <tr>
                        <td><a class="src-name">ilccard.git</a><div class="src-path">/steps/ilccard.git</div></td>
                        <td><span class="badge badge-tool">SonarQube</span></td><td class="lang">JavaScript</td>
                        <td class="share"><svg class="ic is-shared"><use href="#i-shared"/></svg></td>
                        <td><span class="badge badge-done">完成</span></td>
                        <td class="num num-c">2</td><td class="num num-h">648</td><td class="num num-m">434</td><td class="num num-l">177</td>
                        <td class="muted"><svg class="ic user-ic"><use href="#i-person"/></svg>鄭啟宏</td><td class="muted when">06-03 15:55</td>
                        <td><div class="actions"><button class="act act-view"><svg class="ic"><use href="#i-eye"/></svg></button><button class="act act-mail"><svg class="ic"><use href="#i-mail"/></svg></button><button class="act act-del"><svg class="ic"><use href="#i-trash"/></svg></button></div></td>
                    </tr>
                    <tr>
                        <td><a class="src-name">國立成功大學</a><div class="src-path">/steps/president-edu.git</div></td>
                        <td><span class="badge badge-tool">SonarQube</span></td><td class="lang">JavaScript</td>
                        <td class="share"><svg class="ic is-shared"><use href="#i-shared"/></svg></td>
                        <td><span class="badge badge-done">完成</span></td>
                        <td class="num num-c">2</td><td class="num num-h">237</td><td class="num num-m">489</td><td class="num num-l">537</td>
                        <td class="muted"><svg class="ic user-ic"><use href="#i-person"/></svg>鄭啟宏</td><td class="muted when">06-03 15:24</td>
                        <td><div class="actions"><button class="act act-view"><svg class="ic"><use href="#i-eye"/></svg></button><button class="act act-mail"><svg class="ic"><use href="#i-mail"/></svg></button><button class="act act-del"><svg class="ic"><use href="#i-trash"/></svg></button></div></td>
                    </tr>
                    <tr>
                        <td><a class="src-name">國立政治大學行動版</a><div class="src-path">/steps/laravel-nccu.git</div></td>
                        <td><span class="badge badge-tool">SonarQube</span></td><td class="lang">PHP</td>
                        <td class="share"><svg class="ic is-shared"><use href="#i-shared"/></svg></td>
                        <td><span class="badge badge-done">完成</span></td>
                        <td class="num num-c"><span class="nil">•</span></td><td class="num num-h">20</td><td class="num num-m">131</td><td class="num num-l">91</td>
                        <td class="muted"><svg class="ic user-ic"><use href="#i-person"/></svg>鄭啟宏</td><td class="muted when">06-03 15:20</td>
                        <td><div class="actions"><button class="act act-view"><svg class="ic"><use href="#i-eye"/></svg></button><button class="act act-mail"><svg class="ic"><use href="#i-mail"/></svg></button><button class="act act-del"><svg class="ic"><use href="#i-trash"/></svg></button></div></td>
                    </tr>
                    <tr>
                        <td><a class="src-name">智新 - S.web</a><div class="src-path">/steps/sweb.git</div></td>
                        <td><span class="badge badge-tool">SonarQube</span></td><td class="lang">PHP</td>
                        <td class="share"><svg class="ic is-shared"><use href="#i-shared"/></svg></td>
                        <td><span class="badge badge-done">完成</span></td>
                        <td class="num num-c"><span class="nil">•</span></td><td class="num num-h">41</td><td class="num num-m">335</td><td class="num num-l">243</td>
                        <td class="muted"><svg class="ic user-ic"><use href="#i-person"/></svg>鄭啟宏</td><td class="muted when">06-03 15:15</td>
                        <td><div class="actions"><button class="act act-view"><svg class="ic"><use href="#i-eye"/></svg></button><button class="act act-mail"><svg class="ic"><use href="#i-mail"/></svg></button><button class="act act-del"><svg class="ic"><use href="#i-trash"/></svg></button></div></td>
                    </tr>
                    <tr>
                        <td><a class="src-name">中華軟協-政府營運交流平台</a><div class="src-path">/steps/cisa-operational-communication.git</div></td>
                        <td><span class="badge badge-tool">SonarQube</span></td><td class="lang">PHP</td>
                        <td class="share"><svg class="ic is-shared"><use href="#i-shared"/></svg></td>
                        <td><span class="badge badge-done">完成</span></td>
                        <td class="num num-c"><span class="nil">•</span></td><td class="num num-h">343</td><td class="num num-m">710</td><td class="num num-l">324</td>
                        <td class="muted"><svg class="ic user-ic"><use href="#i-person"/></svg>鄭啟宏</td><td class="muted when">06-03 15:07</td>
                        <td><div class="actions"><button class="act act-view"><svg class="ic"><use href="#i-eye"/></svg></button><button class="act act-mail"><svg class="ic"><use href="#i-mail"/></svg></button><button class="act act-del"><svg class="ic"><use href="#i-trash"/></svg></button></div></td>
                    </tr>
                    <tr>
                        <td><a class="src-name">國立空中大學行動版</a><div class="src-path">/var/www/html/nou-smf/sites</div></td>
                        <td><span class="badge badge-tool">SonarQube</span></td><td class="lang">PHP</td>
                        <td class="share"><svg class="ic is-shared"><use href="#i-shared"/></svg></td>
                        <td><span class="badge badge-done">完成</span></td>
                        <td class="num num-c"><span class="nil">•</span></td><td class="num num-h">88</td><td class="num num-m">155</td><td class="num num-l">129</td>
                        <td class="muted"><svg class="ic user-ic"><use href="#i-person"/></svg>鄭啟宏</td><td class="muted when">06-02 14:07</td>
                        <td><div class="actions"><button class="act act-view"><svg class="ic"><use href="#i-eye"/></svg></button><button class="act act-mail"><svg class="ic"><use href="#i-mail"/></svg></button><button class="act act-del"><svg class="ic"><use href="#i-trash"/></svg></button></div></td>
                    </tr>
                    <tr>
                        <td><a class="src-name">portal</a><div class="src-path">/var/www/html/portal</div></td>
                        <td><span class="badge badge-tool">SonarQube</span></td><td class="lang">PHP</td>
                        <td class="share"><svg class="ic is-private"><use href="#i-lock"/></svg></td>
                        <td><span class="badge badge-done">完成</span></td>
                        <td class="num num-c"><span class="nil">•</span></td><td class="num num-h">139</td><td class="num num-m">454</td><td class="num num-l">303</td>
                        <td class="muted"><svg class="ic user-ic"><use href="#i-person"/></svg>—</td><td class="muted when">05-31 17:00</td>
                        <td><div class="actions"><button class="act act-view"><svg class="ic"><use href="#i-eye"/></svg></button><button class="act act-mail"><svg class="ic"><use href="#i-mail"/></svg></button><button class="act act-del"><svg class="ic"><use href="#i-trash"/></svg></button></div></td>
                    </tr>
                    <tr>
                        <td><a class="src-name">vpn</a><div class="src-path">/var/www/html/vpn</div></td>
                        <td><span class="badge badge-tool">SonarQube</span></td><td class="lang">PHP</td>
                        <td class="share"><svg class="ic is-private"><use href="#i-lock"/></svg></td>
                        <td><span class="badge badge-done">完成</span></td>
                        <td class="num num-c">1</td><td class="num num-h">268</td><td class="num num-m">576</td><td class="num num-l">304</td>
                        <td class="muted"><svg class="ic user-ic"><use href="#i-person"/></svg>—</td><td class="muted when">05-31 14:26</td>
                        <td><div class="actions"><button class="act act-view"><svg class="ic"><use href="#i-eye"/></svg></button><button class="act act-mail"><svg class="ic"><use href="#i-mail"/></svg></button><button class="act act-del"><svg class="ic"><use href="#i-trash"/></svg></button></div></td>
                    </tr>
                </tbody>
            </table>

            <div class="table-foot">
                <div class="table-info">顯示第 1 至 16 筆結果&#xFF0C;共 16 筆</div>
                <ul class="pager">
                    <li class="pager-item">上一頁</li>
                    <li class="pager-item is-current">1</li>
                    <li class="pager-item">下一頁</li>
                </ul>
            </div>
        </section>
    </main>
</body>
</html>
```

FILE: styles.css
```css
* {
    box-sizing: border-box;
}
body {
    margin: 0;
    font-family: "Noto Sans CJK TC", "Noto Sans", sans-serif;
    font-size: 16px;
    line-height: 1.5;
    color: #212529;
    background-color: #fff;
}
.icon-defs {
    display: none;
}
.ic {
    width: 14px;
    height: 14px;
    fill: currentColor;
    flex: none;
}

/* navbar */
.navbar {
    height: 58px;
    display: flex;
    align-items: center;
    padding: 0 10px 0 24px;
    background-color: #a87840;
    box-shadow: 0 8px 16px rgba(0,0,0,0.15);
    color: rgba(0,0,0,0.65);
}
.brand {
    font-size: 20px;
    color: rgba(0,0,0,0.9);
    margin-right: 17px;
}
.nav-menu {
    display: flex;
    list-style: none;
    margin: 0;
    padding: 0;
}
.nav-link {
    display: flex;
    align-items: center;
    width: 106.8px;
    padding: 0 8px;
    font-size: 14.25px;
}
.nav-link .ic {
    margin-right: 4px;
}
.nav-plain {
    display: flex;
    align-items: center;
    padding: 0 8px;
    font-size: 14px;
}
.caret {
    display: inline-block;
    margin-left: 7px;
    border-top: 4.3px solid;
    border-left: 4.3px solid transparent;
    border-right: 4.3px solid transparent;
}
.nav-right {
    margin-left: auto;
    display: flex;
    align-items: center;
}
.ic-lg {
    width: 18px;
    height: 18px;
    margin-right: 4px;
}
.ic-user {
    width: 17px;
    height: 17px;
    margin-right: 4px;
}
.nav-bell {
    position: relative;
    display: flex;
    padding: 0 23px 0 7px;
}
.ic-bell {
    width: 17px;
    height: 17px;
}
.bell-count {
    position: absolute;
    top: -20px;
    left: 19px;
    width: 28px;
    height: 17px;
    border-radius: 8px;
    background-color: #dc3545;
    color: #fff;
    font-size: 12px;
    font-weight: 700;
    line-height: 17px;
    text-align: center;
}

/* page */
.page {
    padding: 0 32px;
}
.page-title {
    display: flex;
    align-items: center;
    margin: 0;
    padding-top: 7px;
    height: 69px;
    font-size: 24px;
    font-weight: 500;
    line-height: 36px;
}
.title-icon {
    width: 24px;
    height: 24px;
    color: #0d6efd;
    margin-right: 8px;
}

/* tool cards */
.tool-grid {
    display: grid;
    grid-template-columns: repeat(3, 1fr);
    gap: 16px;
}
.tool-card {
    border: 1px solid rgba(0,0,0,0.15);
    border-top: 5px solid;
    border-radius: 8px;
    background-color: #fff;
    box-shadow: 0 1px 3px rgba(0,0,0,0.1);
    height: 189px;
}
.card-blue { border-top-color: #0d6efd; --tone: #0d6efd; --on-tone: #fff; }
.card-cyan { border-top-color: #0dcaf0; --tone: #0dcaf0; --on-tone: #000; }
.card-yellow { border-top-color: #ffc107; --tone: #ffc107; --on-tone: #000; }
.tool-body {
    padding: 16px;
    height: 144px;
    border-bottom: 1px solid rgba(0,0,0,0.15);
}
.tool-head {
    display: flex;
    justify-content: space-between;
}
.tool-name {
    display: flex;
    align-items: center;
    height: 30px;
    font-size: 16px;
    font-weight: 700;
}
.tool-icon {
    width: 20px;
    height: 20px;
    margin-right: 8px;
    color: var(--tone);
}
.pill {
    margin-left: 8.5px;
    padding: 0 5.5px;
    height: 16px;
    border-radius: 5px;
    color: #fff;
    font-size: 10px;
    font-weight: 700;
    line-height: 15px;
}
.pill-blue { background-color: #0d6efd; }
.pill-cyan { background-color: #0dcaf0; }
.pill-green { background-color: #198754; }
.tool-vendor {
    margin-top: 3px;
    font-size: 11.52px;
    line-height: 18px;
    color: #6c757d;
}
.tool-count {
    text-align: right;
}
.tool-count strong {
    display: block;
    margin: -1px 0 1px;
    font-size: 20.48px;
    line-height: 30px;
    color: var(--tone);
}
.tool-count span {
    display: block;
    font-size: 10.4px;
    line-height: 16px;
    color: #6c757d;
}
.tool-desc {
    margin: 8px 0 0;
    font-size: 12.48px;
    line-height: 19.2px;
    color: #6c757d;
}
.tags {
    display: flex;
    gap: 7px;
    margin-top: 13px;
}
.tag {
    height: 19px;
    padding: 0 6.5px;
    border: 1px solid #dee2e6;
    border-radius: 5px;
    background-color: #f8f9fa;
    color: #000;
    font-size: 10px;
    font-weight: 700;
    line-height: 17px;
}
.tool-foot {
    display: flex;
    gap: 8px;
    padding: 0 16px;
}
.tool-foot button {
    height: 31px;
    padding-bottom: 2px;
    border-radius: 4px;
    font-family: inherit;
    font-size: 14px;
    display: flex;
    align-items: center;
    justify-content: center;
}
.btn-add {
    flex: 1;
    background-color: var(--tone);
    color: var(--on-tone);
    border: 1px solid var(--tone);
}
.btn-add .ic {
    width: 14px;
    height: 14px;
    margin-right: 4px;
}
.tool-foot .btn-list {
    padding: 0 8px 2px;
    background-color: #fff;
    color: var(--tone);
    border: 1px solid var(--tone);
}
.btn-list .ic {
    margin-right: 4px;
}

/* scan table panel */
.panel {
    margin-top: 24px;
    border: 1px solid rgba(0,0,0,0.15);
    border-radius: 8px;
    box-shadow: 0 1px 3px rgba(0,0,0,0.1);
    overflow: hidden;
}
.panel-head {
    height: 48px;
    display: flex;
    justify-content: space-between;
    align-items: center;
    padding: 0 16px;
    background-color: #f8f9fa;
    border-bottom: 1px solid rgba(0,0,0,0.15);
}
.panel-title {
    display: flex;
    align-items: center;
    margin-top: -2px;
    font-weight: 700;
}
.panel-title .ic {
    width: 16px;
    height: 16px;
    margin-right: 8px;
}
.panel-search {
    display: flex;
    gap: 8px;
}
.search-box {
    width: 220px;
    height: 31px;
    display: flex;
    align-items: center;
    padding-left: 8px;
    background-color: #fff;
    border: 1px solid #dee2e6;
    border-radius: 4px;
    color: #495057;
}
.search-box input {
    flex: 1;
    min-width: 0;
    margin: 0 0 2px 14px;
    padding: 1px 2px;
    border: 0;
    outline: 0;
    font-family: inherit;
    font-size: 14px;
}
input::placeholder {
    color: #6c757d;
    opacity: 1;
}
.btn-search {
    width: 62px;
    height: 31px;
    padding-bottom: 2px;
    border: 0;
    border-radius: 4px;
    background-color: #0d6efd;
    color: #fff;
    font-family: inherit;
    font-size: 14px;
}
.table-tools {
    height: 37px;
    display: flex;
    justify-content: space-between;
    align-items: flex-start;
}
.length, .filter {
    display: flex;
    align-items: flex-start;
    height: 31px;
    line-height: 28px;
}
.length-select {
    width: 70px;
    height: 31px;
    margin: 0 3px 0 4px;
    padding: 0 0 3px 8px;
    appearance: none;
    border: 1px solid #dee2e6;
    border-radius: 4px;
    background: #fff url("data:image/svg+xml,%3csvg xmlns='http://www.w3.org/2000/svg' viewBox='0 0 16 16'%3e%3cpath fill='none' stroke='%23343a40' stroke-linecap='round' stroke-linejoin='round' stroke-width='2' d='m2 5 6 6 6-6'/%3e%3c/svg%3e") no-repeat right 14px center / 12px 12px;
    font-family: inherit;
    font-size: 16px;
    color: #212529;
}
.filter input {
    width: 174px;
    height: 31px;
    margin-left: 7px;
    padding: 0 8px 2px;
    border: 1px solid #dee2e6;
    border-radius: 4px;
    font-family: inherit;
    font-size: 14px;
}

/* table */
.scans {
    width: 100%;
    table-layout: fixed;
    border-collapse: collapse;
}
.w-src { width: 388px; }
.w-tool { width: 128px; }
.w-lang { width: 108px; }
.w-share { width: 79px; }
.w-state { width: 79px; }
.w-c { width: 47px; }
.w-h { width: 66px; }
.w-m { width: 52px; }
.w-l { width: 53px; }
.w-user { width: 101px; }
.w-time { width: 115px; }
.w-act { width: 158px; }
.scans th {
    position: relative;
    height: 32.1px;
    padding: 3px 4px;
    background-color: #f8f9fa;
    border-bottom: 1px solid #c8cacc;
    color: #000;
    font-weight: 700;
    text-align: left;
    white-space: nowrap;
}
.scans th.sev {
    padding-right: 20px;
    text-align: center;
}
.scans th.sev-c { color: #dc3545; }
.scans th.sev-h { color: #e8590c; }
.scans th.sev-m { color: #dd7d0c; }
.scans th.sev-l { color: #16a34a; }
.sort {
    position: absolute;
    right: 5px;
    top: 6px;
    width: 12px;
    height: 21px;
    background-color: currentColor;
    opacity: 0.15;
    clip-path: polygon(50% 0, 100% 50%, 50% 100%, 0 50%);
}
.sort-desc {
    opacity: 1;
    background: linear-gradient(to bottom, #d9d9d9 50%, #666 50%);
}
.scans td {
    height: 49.29px;
    padding: 4px;
    border-bottom: 1px solid #dee2e6;
    font-size: 14px;
    vertical-align: middle;
    white-space: nowrap;
}
.muted {
    color: #6c757d;
}
.scans td.when {
    padding-bottom: 6px;
}
.scans td.lang {
    padding-top: 7px;
    color: #6c757d;
}
.src-name {
    display: block;
    font-size: 16px;
    font-weight: 700;
    line-height: 24px;
    color: #0d6efd;
}
.src-path {
    font-family: "Liberation Mono", monospace;
    font-size: 10.88px;
    line-height: 16px;
    color: #6c757d;
}
.src-file {
    display: flex;
    align-items: center;
    font-size: 10.88px;
    line-height: 16px;
    color: #6c757d;
}
.src-file .ic {
    width: 11px;
    height: 11px;
    margin-right: 4px;
}
.badge {
    display: inline-block;
    height: 21px;
    margin-top: 2px;
    border-radius: 5px;
    color: #fff;
    font-size: 12px;
    font-weight: 700;
    line-height: 21px;
    padding: 0 8px;
    vertical-align: middle;
}
.badge-tool {
    background-color: #ffc107;
}
.badge-done {
    padding: 0 7.5px;
    background-color: #198754;
}
.scans td.share {
    padding: 6px 6px 4px 4px;
    text-align: center;
}
.share .ic {
    width: 16px;
    height: 16px;
    vertical-align: middle;
}
.is-shared {
    color: #ffc107;
}
.is-private {
    color: #6c757d;
}
.scans td.num {
    padding-top: 6px;
    font-size: 16px;
    font-weight: 700;
    text-align: center;
}
.num-c { color: #dc3545; }
.num-h { color: #e8590c; }
.num-m { color: #dd7d0c; }
.num-l { color: #16a34a; }
.nil {
    font-size: 14px;
}
.user-ic {
    width: 13px;
    height: 13px;
    margin-right: 4px;
    vertical-align: -1px;
}
.actions {
    display: flex;
    gap: 4px;
}
.act {
    width: 32px;
    height: 31px;
    display: flex;
    align-items: center;
    justify-content: center;
    padding: 0;
    background-color: #fff;
    border: 1px solid;
    border-radius: 4px;
}
.act .ic {
    opacity: 0.85;
}
.act-view { color: #6c757d; }
.act-mail { color: #0d6efd; }
.act-del { color: #dc3545; }

/* footer of table */
.table-foot {
    display: flex;
    justify-content: space-between;
    align-items: flex-end;
    padding-top: 9px;
    padding-bottom: 2px;
}
.table-info {
    padding-bottom: 3px;
}
.pager {
    display: flex;
    list-style: none;
    margin: 0;
    padding: 0;
    border-radius: 6px;
    overflow: hidden;
    background-color: #e9ecef;
}
.pager-item {
    padding: 7px 12.5px;
    color: #6c757d;
}
.is-current {
    padding: 7px 13px;
    background-color: #0d6efd;
    color: #fff;
}
```
